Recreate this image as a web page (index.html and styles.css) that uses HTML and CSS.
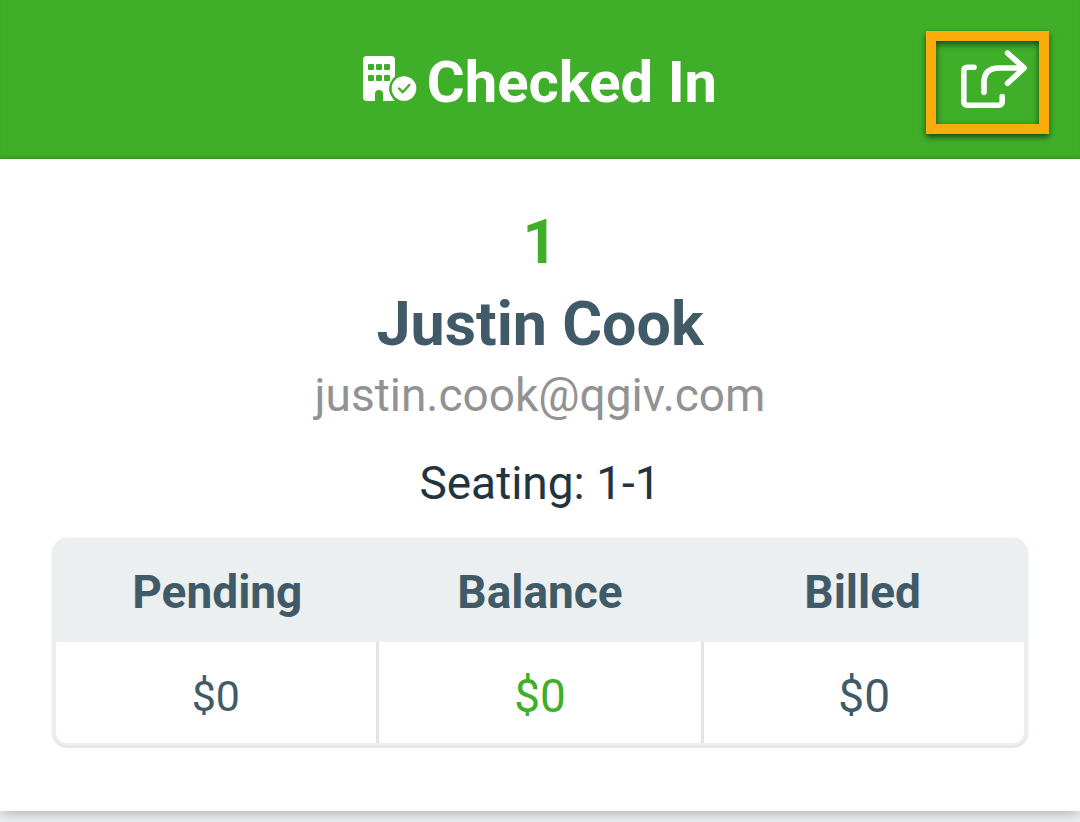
FILE: index.html
```
<!DOCTYPE html>
<html lang="en">
<head>
    <meta charset="UTF-8">
    <meta name="viewport" content="width=device-width, initial-scale=1">
    <title>Checked In</title>
    <link rel="stylesheet" href="styles.css">
</head>
<body>

<header class="topbar">
    <h1 class="status">
        <svg class="status-icon" viewBox="0 0 54 46" aria-hidden="true">
            <path fill="#fff" fill-rule="evenodd" d="M4 0H28Q32 0 32 4V45H20V38A4 4 0 0 0 12 38V45H4Q0 45 0 41V4Q0 0 4 0Z
                M6 8h4q1 0 1 1v4q0 1-1 1h-4q-1 0-1-1v-4q0-1 1-1z
                M14 8h4q1 0 1 1v4q0 1-1 1h-4q-1 0-1-1v-4q0-1 1-1z
                M22 8h4q1 0 1 1v4q0 1-1 1h-4q-1 0-1-1v-4q0-1 1-1z
                M6 19h4q1 0 1 1v4q0 1-1 1h-4q-1 0-1-1v-4q0-1 1-1z
                M14 19h4q1 0 1 1v4q0 1-1 1h-4q-1 0-1-1v-4q0-1 1-1z
                M22 19h4q1 0 1 1v4q0 1-1 1h-4q-1 0-1-1v-4q0-1 1-1z"/>
            <path fill="#3fae29" d="M41 17.500a15 15 0 0 0-11.500 24.500q1 1.500 2.500 3.500h9z"/>
            <path fill="#fff" d="M28 41q1.500 2.500 3.500 4H27z"/>
            <circle cx="41" cy="32.500" r="12.300" fill="#fff"/>
            <path fill="none" stroke="#3fae29" stroke-width="2.400" stroke-linecap="round" stroke-linejoin="round" d="M36 32.500l3.700 3.700 6.600-7.200"/>
        </svg>
        Checked In
    </h1>
    <button class="share" type="button" aria-label="Share">
        <svg viewBox="0 0 103 83" aria-hidden="true">
            <g fill="none" stroke="#fff" stroke-width="5.600" stroke-linecap="round" stroke-linejoin="round">
                <path d="M38 26.300H31.500Q27.800 26.300 27.800 30V60.500Q27.800 64.200 31.500 64.200H62.500Q66.200 64.200 66.200 60.500V55.500"/>
                <path d="M48 51.200V41.500Q48 27 63 27H86"/>
                <path d="M71.500 12L88.200 27 71.500 42.300"/>
            </g>
        </svg>
    </button>
</header>

<main class="guest">
    <p class="bidder">1</p>
    <h2 class="name">Justin Cook</h2>
    <p class="email">justin.cook@qgiv.com</p>
    <p class="seating">Seating: 1-1</p>

    <table class="totals">
        <thead>
        <tr>
            <th scope="col">Pending</th>
            <th scope="col">Balance</th>
            <th scope="col">Billed</th>
        </tr>
        </thead>
        <tbody>
        <tr>
            <td class="pending">$0</td>
            <td class="balance">$0</td>
            <td class="billed">$0</td>
        </tr>
        </tbody>
    </table>
</main>

</body>
</html>
```
FILE: styles.css
```
* {
    box-sizing: border-box;
}

body {
    min-height: 100vh;
    margin: 0;
    background-color: #eaeced;
    font-family: Roboto, "Liberation Sans", sans-serif;
    color: #415a68;
}

h1, h2, p {
    margin: 0;
}

.topbar {
    display: grid;
    grid-template-columns: 1fr auto 1fr;
    align-items: center;
    padding: 31px 31px 25px;
    background-color: #3fae29;
    box-shadow: inset 0 -4px 4px -3px rgba(0, 0, 0, .2);
}

.status {
    grid-column: 2;
    display: flex;
    align-items: flex-start;
    gap: 10px;
    padding-bottom: 2px;
    font-size: 58px;
    line-height: 68px;
    color: #fff;
}

.status-icon {
    width: 54px;
    height: 46px;
    margin-top: 8px;
}

.share {
    justify-self: end;
    width: 123px;
    height: 103px;
    padding: 0;
    border: 10px solid #f9ad0b;
    background: none;
    box-shadow: 0 3px 6px rgba(0, 0, 0, .6), inset 0 3px 6px rgba(0, 0, 0, .6);
    cursor: pointer;
}

.share svg {
    display: block;
    width: 103px;
    height: 83px;
}

.guest {
    padding: 42px 53px 65px;
    background-color: #fff;
    box-shadow: 0 3px 12px -2px rgba(0, 0, 0, .3);
    clip-path: inset(0 0 -20px);
    text-align: center;
}

.bidder,
.name {
    font-size: 61px;
    font-weight: bold;
    line-height: 82px;
}

.bidder {
    color: #3fae29;
}

.email {
    font-size: 46px;
    line-height: 60px;
    color: #929292;
}

.seating {
    margin-top: 28px;
    font-size: 46px;
    line-height: 60px;
    color: #223440;
}

.totals {
    width: 100%;
    margin-top: 25px;
    table-layout: fixed;
    border: 3px solid #ebefef;
    border-radius: 14px;
    border-spacing: 0;
    background-color: #ebefef;
    box-shadow: 0 1px 3px rgba(0, 0, 0, .2);
}

.totals th,
.totals td {
    height: 101px;
    padding: 0;
    font-size: 46px;
    line-height: 60px;
}

.totals td {
    padding-top: 6px;
    background-color: #fff;
}

.totals .pending {
    border-right: 3px solid #e3e5e5;
    border-bottom-left-radius: 11px;
    font-size: 43px;
}

.totals .balance {
    color: #3fae29;
}

.totals .billed {
    border-left: 3px solid #e3e5e5;
    border-bottom-right-radius: 11px;
}
```
